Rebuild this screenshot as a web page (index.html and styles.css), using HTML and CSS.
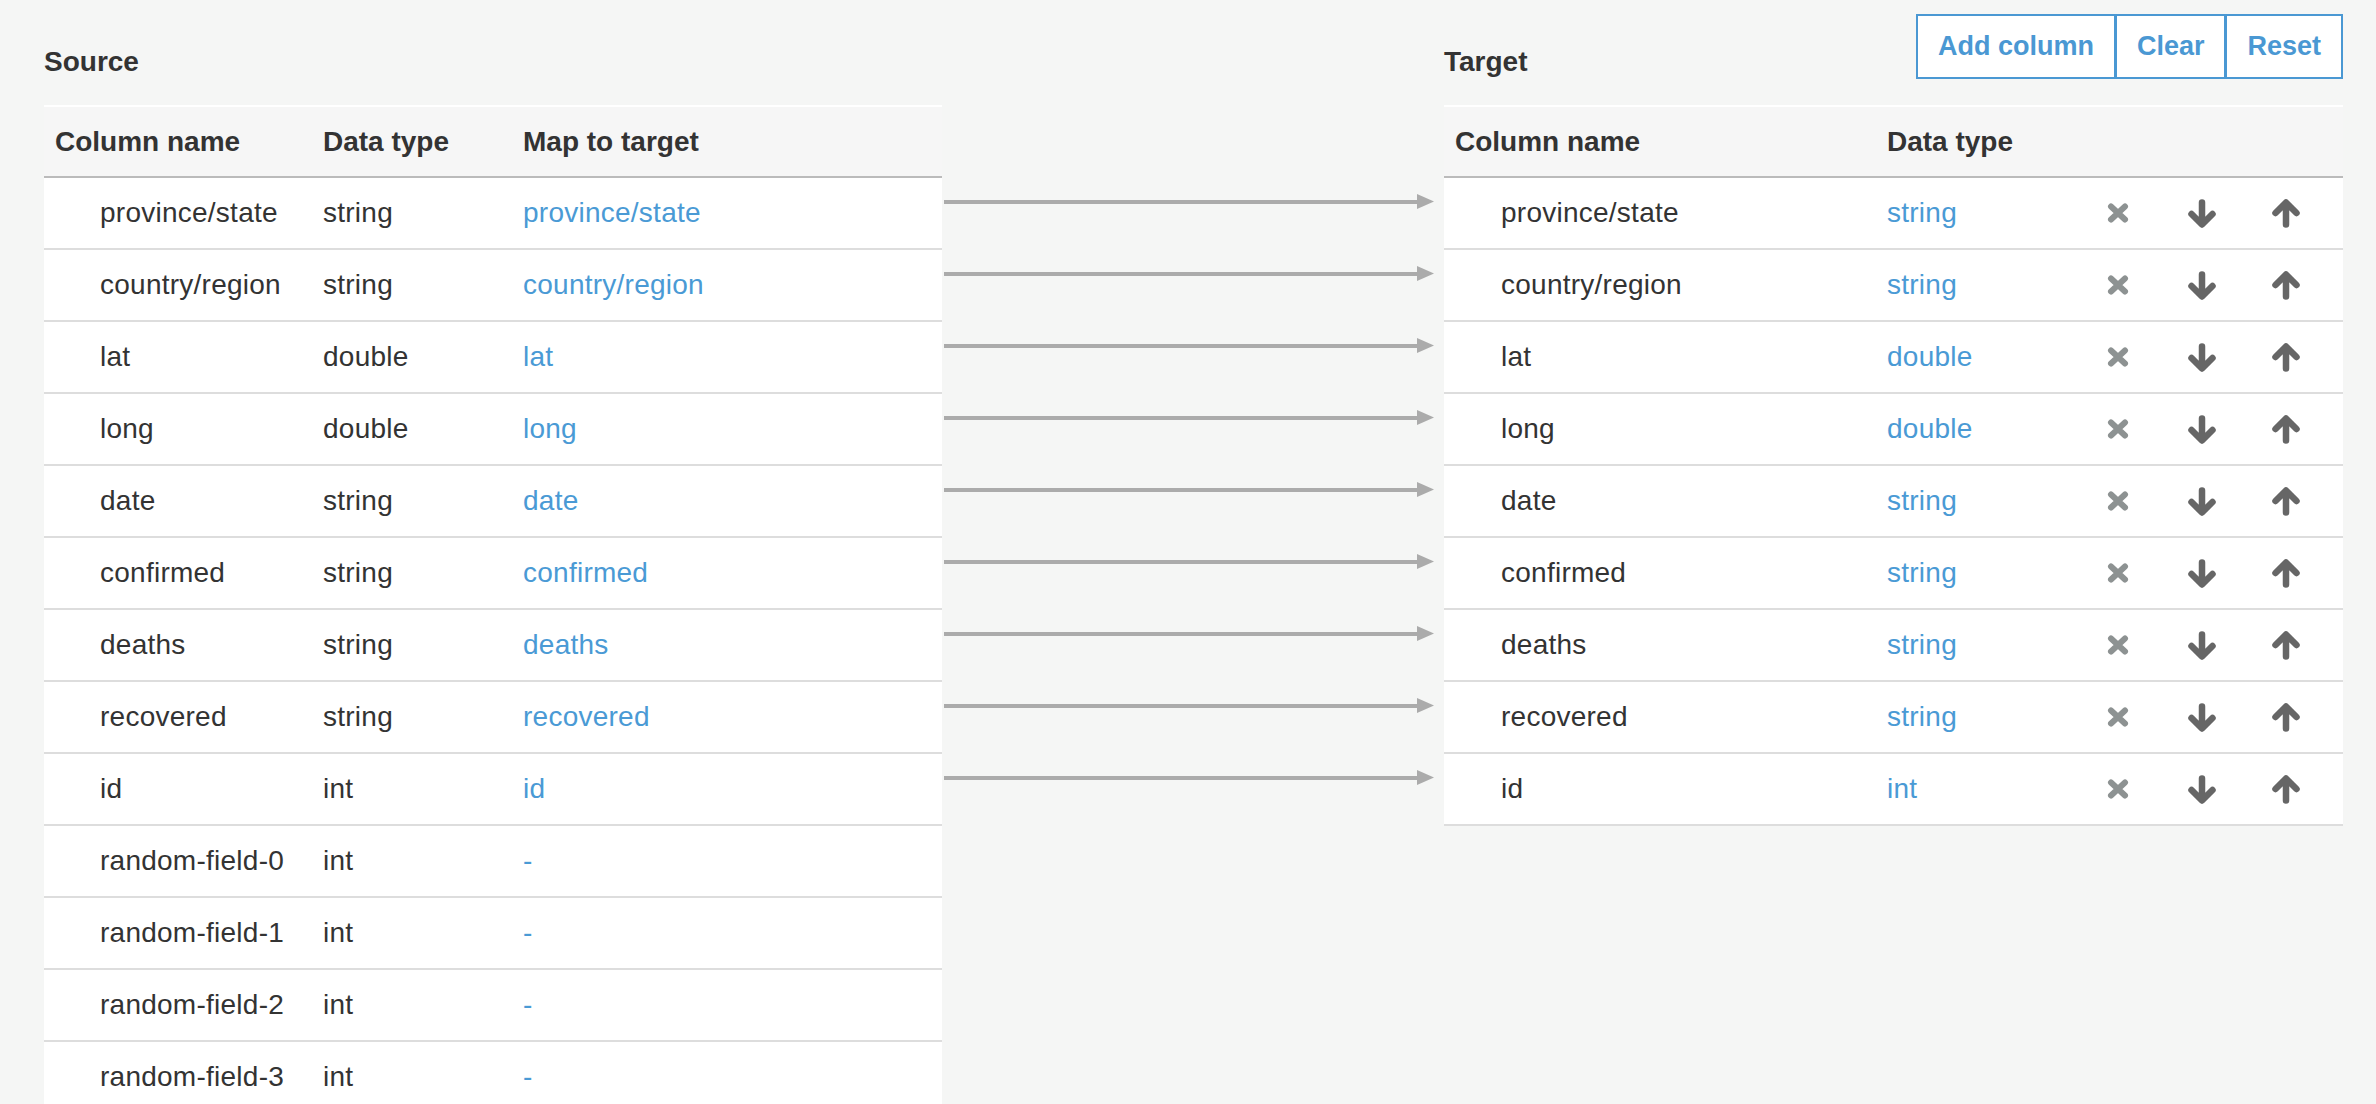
FILE: index.html
```html
<!DOCTYPE html>
<html lang="en">
<head>
<meta charset="utf-8">
<title>Column mapping</title>
<link rel="stylesheet" href="styles.css">
</head>
<body>
<div class="mapper">
  <section class="panel source">
    <div class="panel-bar">
      <h2 class="panel-title">Source</h2>
    </div>
    <div class="table">
      <div class="row head"><div class="cell name">Column name</div><div class="cell">Data type</div><div class="cell">Map to target</div></div>
      <div class="row"><div class="cell name">province/state</div><div class="cell">string</div><div class="cell link">province/state</div></div>
      <div class="row"><div class="cell name">country/region</div><div class="cell">string</div><div class="cell link">country/region</div></div>
      <div class="row"><div class="cell name">lat</div><div class="cell">double</div><div class="cell link">lat</div></div>
      <div class="row"><div class="cell name">long</div><div class="cell">double</div><div class="cell link">long</div></div>
      <div class="row"><div class="cell name">date</div><div class="cell">string</div><div class="cell link">date</div></div>
      <div class="row"><div class="cell name">confirmed</div><div class="cell">string</div><div class="cell link">confirmed</div></div>
      <div class="row"><div class="cell name">deaths</div><div class="cell">string</div><div class="cell link">deaths</div></div>
      <div class="row"><div class="cell name">recovered</div><div class="cell">string</div><div class="cell link">recovered</div></div>
      <div class="row"><div class="cell name">id</div><div class="cell">int</div><div class="cell link">id</div></div>
      <div class="row"><div class="cell name">random-field-0</div><div class="cell">int</div><div class="cell link">-</div></div>
      <div class="row"><div class="cell name">random-field-1</div><div class="cell">int</div><div class="cell link">-</div></div>
      <div class="row"><div class="cell name">random-field-2</div><div class="cell">int</div><div class="cell link">-</div></div>
      <div class="row"><div class="cell name">random-field-3</div><div class="cell">int</div><div class="cell link">-</div></div>
    </div>
  </section>

  <div class="links">
    <div class="link-row"><svg class="arrow" viewBox="0 0 502 72" width="502" height="72"><rect x="2" y="22" width="474" height="4"/><polygon points="475,16 492,23.5 475,31"/></svg></div>
    <div class="link-row"><svg class="arrow" viewBox="0 0 502 72" width="502" height="72"><rect x="2" y="22" width="474" height="4"/><polygon points="475,16 492,23.5 475,31"/></svg></div>
    <div class="link-row"><svg class="arrow" viewBox="0 0 502 72" width="502" height="72"><rect x="2" y="22" width="474" height="4"/><polygon points="475,16 492,23.5 475,31"/></svg></div>
    <div class="link-row"><svg class="arrow" viewBox="0 0 502 72" width="502" height="72"><rect x="2" y="22" width="474" height="4"/><polygon points="475,16 492,23.5 475,31"/></svg></div>
    <div class="link-row"><svg class="arrow" viewBox="0 0 502 72" width="502" height="72"><rect x="2" y="22" width="474" height="4"/><polygon points="475,16 492,23.5 475,31"/></svg></div>
    <div class="link-row"><svg class="arrow" viewBox="0 0 502 72" width="502" height="72"><rect x="2" y="22" width="474" height="4"/><polygon points="475,16 492,23.5 475,31"/></svg></div>
    <div class="link-row"><svg class="arrow" viewBox="0 0 502 72" width="502" height="72"><rect x="2" y="22" width="474" height="4"/><polygon points="475,16 492,23.5 475,31"/></svg></div>
    <div class="link-row"><svg class="arrow" viewBox="0 0 502 72" width="502" height="72"><rect x="2" y="22" width="474" height="4"/><polygon points="475,16 492,23.5 475,31"/></svg></div>
    <div class="link-row"><svg class="arrow" viewBox="0 0 502 72" width="502" height="72"><rect x="2" y="22" width="474" height="4"/><polygon points="475,16 492,23.5 475,31"/></svg></div>
  </div>

  <section class="panel target">
    <div class="panel-bar">
      <h2 class="panel-title">Target</h2>
      <div class="btn-group">
        <button class="btn">Add column</button><button class="btn">Clear</button><button class="btn">Reset</button>
      </div>
    </div>
    <div class="table">
      <div class="row head"><div class="cell name">Column name</div><div class="cell">Data type</div><div class="cell"></div><div class="cell"></div><div class="cell"></div><div class="cell"></div></div>
      <div class="row"><div class="cell name">province/state</div><div class="cell link">string</div><div class="cell icon"><svg class="i-x" width="22" height="20" viewBox="0 0 22 20"><path d="M4 3.5 L18 16.5 M18 3.5 L4 16.5"/></svg></div><div class="cell icon"><svg class="i-arr" width="30" height="29" viewBox="0 0 30 29"><path d="M15 3.5 V25 M4.5 15 L15 25.5 L25.5 15"/></svg></div><div class="cell icon"><svg class="i-arr" width="30" height="29" viewBox="0 0 30 29"><path d="M15 25.5 V4 M4.5 14 L15 3.5 L25.5 14"/></svg></div><div class="cell"></div></div>
      <div class="row"><div class="cell name">country/region</div><div class="cell link">string</div><div class="cell icon"><svg class="i-x" width="22" height="20" viewBox="0 0 22 20"><path d="M4 3.5 L18 16.5 M18 3.5 L4 16.5"/></svg></div><div class="cell icon"><svg class="i-arr" width="30" height="29" viewBox="0 0 30 29"><path d="M15 3.5 V25 M4.5 15 L15 25.5 L25.5 15"/></svg></div><div class="cell icon"><svg class="i-arr" width="30" height="29" viewBox="0 0 30 29"><path d="M15 25.5 V4 M4.5 14 L15 3.5 L25.5 14"/></svg></div><div class="cell"></div></div>
      <div class="row"><div class="cell name">lat</div><div class="cell link">double</div><div class="cell icon"><svg class="i-x" width="22" height="20" viewBox="0 0 22 20"><path d="M4 3.5 L18 16.5 M18 3.5 L4 16.5"/></svg></div><div class="cell icon"><svg class="i-arr" width="30" height="29" viewBox="0 0 30 29"><path d="M15 3.5 V25 M4.5 15 L15 25.5 L25.5 15"/></svg></div><div class="cell icon"><svg class="i-arr" width="30" height="29" viewBox="0 0 30 29"><path d="M15 25.5 V4 M4.5 14 L15 3.5 L25.5 14"/></svg></div><div class="cell"></div></div>
      <div class="row"><div class="cell name">long</div><div class="cell link">double</div><div class="cell icon"><svg class="i-x" width="22" height="20" viewBox="0 0 22 20"><path d="M4 3.5 L18 16.5 M18 3.5 L4 16.5"/></svg></div><div class="cell icon"><svg class="i-arr" width="30" height="29" viewBox="0 0 30 29"><path d="M15 3.5 V25 M4.5 15 L15 25.5 L25.5 15"/></svg></div><div class="cell icon"><svg class="i-arr" width="30" height="29" viewBox="0 0 30 29"><path d="M15 25.5 V4 M4.5 14 L15 3.5 L25.5 14"/></svg></div><div class="cell"></div></div>
      <div class="row"><div class="cell name">date</div><div class="cell link">string</div><div class="cell icon"><svg class="i-x" width="22" height="20" viewBox="0 0 22 20"><path d="M4 3.5 L18 16.5 M18 3.5 L4 16.5"/></svg></div><div class="cell icon"><svg class="i-arr" width="30" height="29" viewBox="0 0 30 29"><path d="M15 3.5 V25 M4.5 15 L15 25.5 L25.5 15"/></svg></div><div class="cell icon"><svg class="i-arr" width="30" height="29" viewBox="0 0 30 29"><path d="M15 25.5 V4 M4.5 14 L15 3.5 L25.5 14"/></svg></div><div class="cell"></div></div>
      <div class="row"><div class="cell name">confirmed</div><div class="cell link">string</div><div class="cell icon"><svg class="i-x" width="22" height="20" viewBox="0 0 22 20"><path d="M4 3.5 L18 16.5 M18 3.5 L4 16.5"/></svg></div><div class="cell icon"><svg class="i-arr" width="30" height="29" viewBox="0 0 30 29"><path d="M15 3.5 V25 M4.5 15 L15 25.5 L25.5 15"/></svg></div><div class="cell icon"><svg class="i-arr" width="30" height="29" viewBox="0 0 30 29"><path d="M15 25.5 V4 M4.5 14 L15 3.5 L25.5 14"/></svg></div><div class="cell"></div></div>
      <div class="row"><div class="cell name">deaths</div><div class="cell link">string</div><div class="cell icon"><svg class="i-x" width="22" height="20" viewBox="0 0 22 20"><path d="M4 3.5 L18 16.5 M18 3.5 L4 16.5"/></svg></div><div class="cell icon"><svg class="i-arr" width="30" height="29" viewBox="0 0 30 29"><path d="M15 3.5 V25 M4.5 15 L15 25.5 L25.5 15"/></svg></div><div class="cell icon"><svg class="i-arr" width="30" height="29" viewBox="0 0 30 29"><path d="M15 25.5 V4 M4.5 14 L15 3.5 L25.5 14"/></svg></div><div class="cell"></div></div>
      <div class="row"><div class="cell name">recovered</div><div class="cell link">string</div><div class="cell icon"><svg class="i-x" width="22" height="20" viewBox="0 0 22 20"><path d="M4 3.5 L18 16.5 M18 3.5 L4 16.5"/></svg></div><div class="cell icon"><svg class="i-arr" width="30" height="29" viewBox="0 0 30 29"><path d="M15 3.5 V25 M4.5 15 L15 25.5 L25.5 15"/></svg></div><div class="cell icon"><svg class="i-arr" width="30" height="29" viewBox="0 0 30 29"><path d="M15 25.5 V4 M4.5 14 L15 3.5 L25.5 14"/></svg></div><div class="cell"></div></div>
      <div class="row"><div class="cell name">id</div><div class="cell link">int</div><div class="cell icon"><svg class="i-x" width="22" height="20" viewBox="0 0 22 20"><path d="M4 3.5 L18 16.5 M18 3.5 L4 16.5"/></svg></div><div class="cell icon"><svg class="i-arr" width="30" height="29" viewBox="0 0 30 29"><path d="M15 3.5 V25 M4.5 15 L15 25.5 L25.5 15"/></svg></div><div class="cell icon"><svg class="i-arr" width="30" height="29" viewBox="0 0 30 29"><path d="M15 25.5 V4 M4.5 14 L15 3.5 L25.5 14"/></svg></div><div class="cell"></div></div>
    </div>
  </section>
</div>
</body>
</html>
```

FILE: styles.css
```css
html, body {
  margin: 0;
  padding: 0;
  overflow: hidden;
}

body {
  background: #f5f6f5;
  font-family: "Liberation Sans", Arial, Helvetica, sans-serif;
  font-size: 28px;
  color: #333333;
}

.mapper {
  display: grid;
  grid-template-columns: 898px 502px 899px;
  padding: 0 33px 0 44px;
  align-items: start;
}

.panel-bar {
  height: 105px;
  display: flex;
  justify-content: space-between;
  align-items: flex-start;
}

.panel-title {
  margin: 46px 0 0 0;
  font-size: 28px;
  line-height: 32px;
  font-weight: bold;
  color: #333333;
}

.btn-group {
  display: flex;
  margin-top: 14px;
}

.btn {
  height: 65px;
  padding: 0 20px;
  background: #ffffff;
  border: 2px solid #4a98d3;
  color: #4a98d3;
  font-family: "Liberation Sans", Arial, Helvetica, sans-serif;
  font-size: 27px;
  font-weight: bold;
  line-height: 61px;
  cursor: pointer;
}

.btn + .btn {
  margin-left: -1px;
}

.table {
  display: flex;
  flex-direction: column;
}

.row {
  display: grid;
  height: 70px;
  align-items: center;
  background: #ffffff;
  border-bottom: 2px solid #dddddd;
  letter-spacing: 0.25px;
}

.source .row {
  grid-template-columns: 279px 200px 1fr;
}

.target .row {
  grid-template-columns: 443px 189px 84px 84px 84px 1fr;
}

.row.head {
  height: 69px;
  background: #f6f6f6;
  border-top: 2px solid #ffffff;
  border-bottom: 2px solid #bbbbbb;
  font-weight: bold;
  letter-spacing: 0;
}

.cell {
  white-space: nowrap;
}

.cell.name {
  padding-left: 56px;
}

.target .cell.name {
  padding-left: 57px;
}

.row.head .cell.name {
  padding-left: 11px;
}

.cell.link {
  color: #4a9ad5;
}

.cell.icon {
  display: flex;
  justify-content: center;
  align-items: center;
}

.i-x path {
  fill: none;
  stroke: #8d9292;
  stroke-width: 6;
  stroke-linecap: round;
}

.i-arr path {
  fill: none;
  stroke: #666666;
  stroke-width: 6.5;
  stroke-linecap: round;
  stroke-linejoin: round;
}

.links {
  padding-top: 178px;
  display: flex;
  flex-direction: column;
}

.link-row {
  height: 72px;
}

.arrow {
  display: block;
}

.arrow rect,
.arrow polygon {
  fill: #ababab;
}
```
